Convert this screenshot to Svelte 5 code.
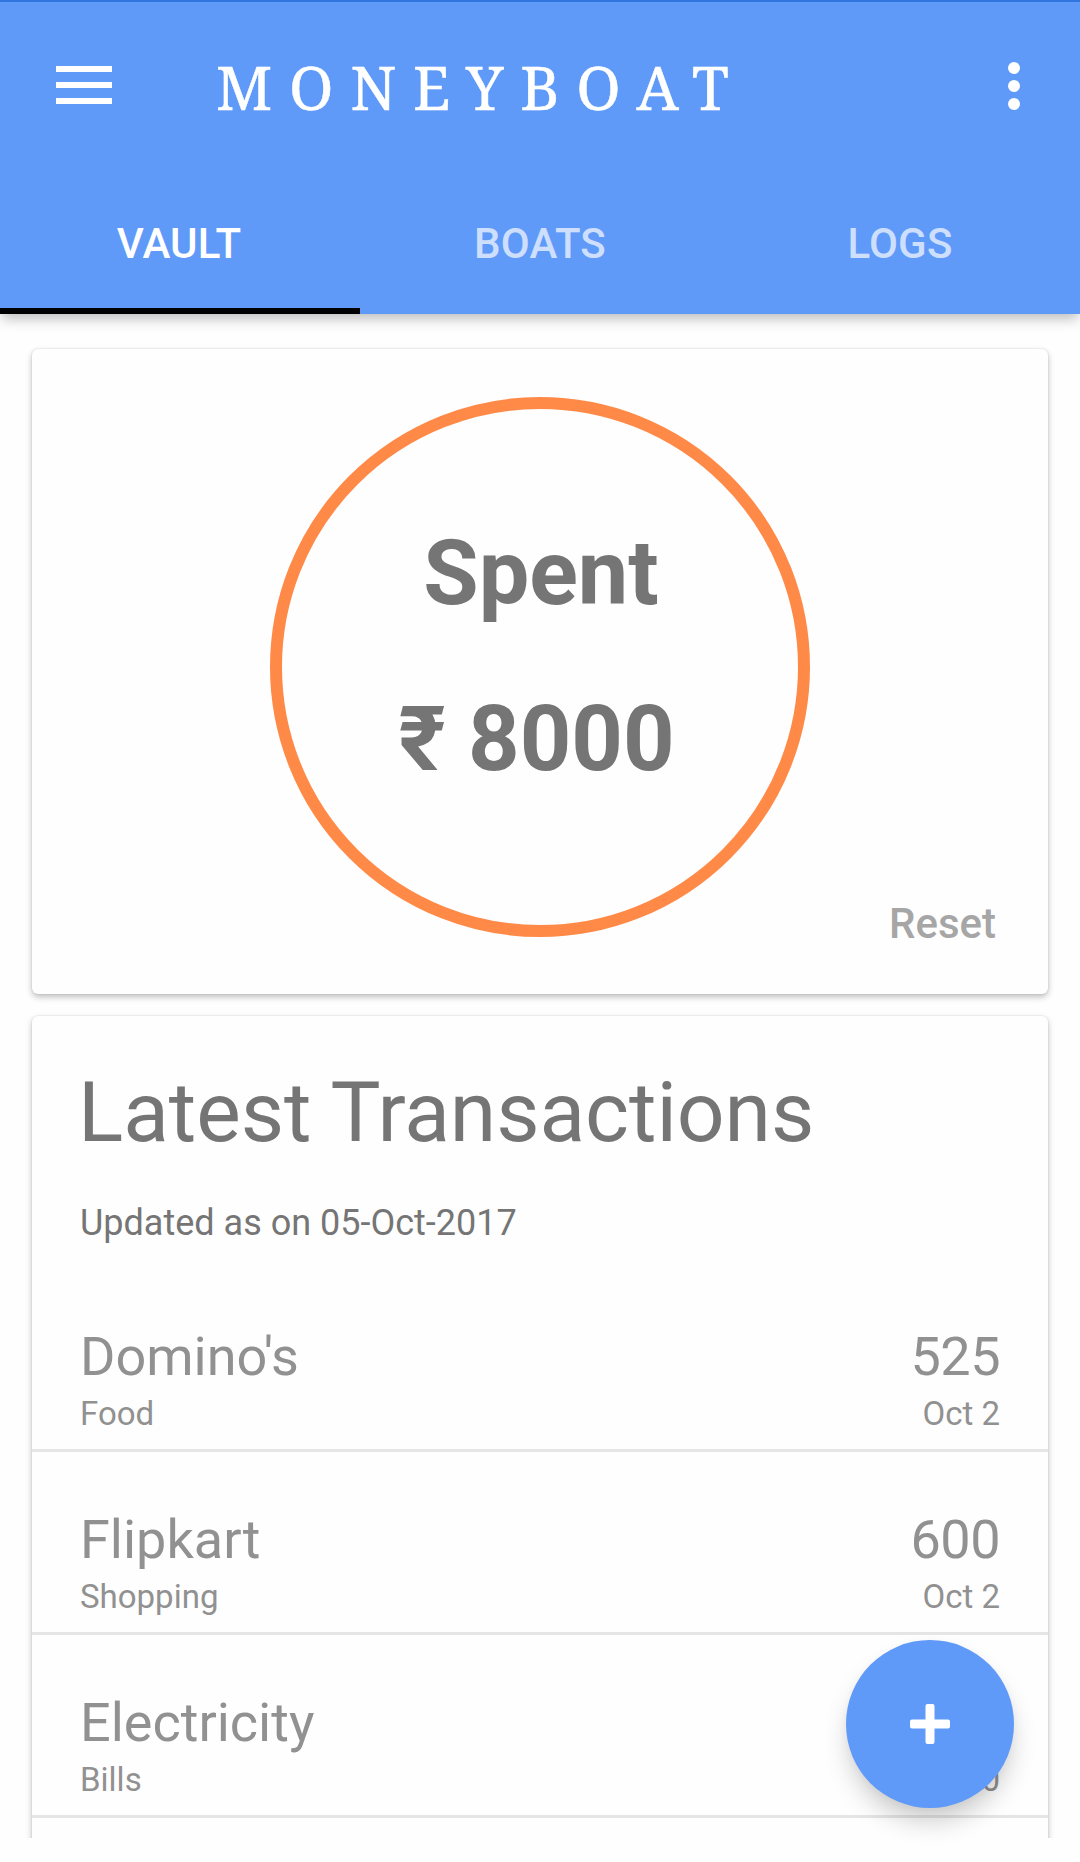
<script>
  const tabs = ['VAULT', 'BOATS', 'LOGS'];
  let active = $state(0);

  const transactions = [
    { name: "Domino's", category: 'Food', amount: 525, date: 'Oct 2' },
    { name: 'Flipkart', category: 'Shopping', amount: 600, date: 'Oct 2' },
    { name: 'Electricity', category: 'Bills', amount: 350, date: 'Sep 30' }
  ];
</script>

<div class="screen">
  <header class="app-bar">
    <div class="toolbar">
      <button class="icon-btn" aria-label="Menu">
        <svg width="56" height="40" viewBox="0 0 56 40" fill="#fff">
          <rect width="56" height="6" />
          <rect y="16" width="56" height="6" />
          <rect y="32" width="56" height="6" />
        </svg>
      </button>
      <h1 class="brand">MONEYBOAT</h1>
      <button class="icon-btn" aria-label="More options">
        <svg width="12" height="48" viewBox="0 0 12 48" fill="#fff">
          <circle cx="6" cy="6" r="6" />
          <circle cx="6" cy="24" r="6" />
          <circle cx="6" cy="42" r="6" />
        </svg>
      </button>
    </div>
    <nav class="tabs">
      {#each tabs as tab, i}
        <button class="tab" class:active={active === i} onclick={() => (active = i)}>{tab}</button>
      {/each}
    </nav>
  </header>

  <main class="content">
    <section class="card summary">
      <div class="ring">
        <span>Spent</span>
        <span class="total">₹ 8000</span>
      </div>
      <button class="reset">Reset</button>
    </section>

    <section class="card latest">
      <h2>Latest Transactions</h2>
      <p class="updated">Updated as on 05-Oct-2017</p>
      <ul>
        {#each transactions as t}
          <li>
            <div class="line main"><span>{t.name}</span><span class="amount">{t.amount}</span></div>
            <div class="line sub"><span>{t.category}</span><span>{t.date}</span></div>
          </li>
        {/each}
      </ul>
    </section>
  </main>

  <button class="fab" aria-label="Add transaction">
    <svg width="40" height="40" viewBox="0 0 40 40" fill="#fff">
      <rect x="15.5" width="9" height="40" rx="2" />
      <rect y="15.5" width="40" height="9" rx="2" />
    </svg>
  </button>
</div>

<style>
  :global(body) {
    margin: 0;
    background: #fefefe;
  }
  button {
    border: 0;
    padding: 0;
    margin: 0;
    background: none;
    font: inherit;
    color: inherit;
  }
  h1, h2, p, ul {
    margin: 0;
    padding: 0;
    font-weight: 400;
  }
  .screen {
    position: relative;
    width: 1080px;
    height: 1862px;
    overflow: hidden;
    display: flex;
    flex-direction: column;
    font-family: Roboto, sans-serif;
    color: #757575;
    background: #fefefe;
  }
  .app-bar {
    flex: none;
    position: relative;
    z-index: 1;
    box-sizing: border-box;
    height: 314px;
    border-top: 2px solid #3175de;
    background: #5f9af9;
    color: #fff;
    box-shadow: 0 7px 12px -2px rgba(0, 0, 0, 0.25);
  }
  .toolbar {
    display: flex;
    align-items: center;
    height: 168px;
    padding: 0 60px 0 56px;
  }
  .icon-btn {
    display: flex;
  }
  .brand {
    flex: 1;
    padding: 1px 0 0 104px;
    font-family: 'Noto Serif', 'DejaVu Serif Condensed', serif;
    font-size: 60px;
    line-height: 80px;
    letter-spacing: 16.8px;
    -webkit-text-stroke: 0.5px #fff;
    white-space: nowrap;
  }
  .tabs {
    display: grid;
    grid-template-columns: repeat(3, 1fr);
    height: 144px;
  }
  .tab {
    box-sizing: border-box;
    padding: 9px 0 0;
    border-bottom: 6px solid transparent;
    font-size: 42px;
    font-weight: 500;
    letter-spacing: 0.2px;
    color: rgba(255, 255, 255, 0.7);
  }
  .tab.active {
    padding-right: 2px;
    border-color: #000;
    color: #fff;
  }
  .content {
    flex: none;
    box-sizing: border-box;
    height: 1524px;
    padding: 35px 32px 0;
    overflow: hidden;
    display: flex;
    flex-direction: column;
    gap: 22px;
  }
  .card {
    flex: none;
    box-sizing: border-box;
    border-radius: 6px;
    background: #fefefe;
    box-shadow: 0 3px 6px rgba(0, 0, 0, 0.25), 0 0 2px rgba(0, 0, 0, 0.14);
  }
  .summary {
    display: grid;
    height: 645px;
    padding: 48px 52px 46px;
  }
  .ring {
    grid-area: 1 / 1;
    justify-self: center;
    box-sizing: border-box;
    width: 540px;
    height: 540px;
    padding: 0 0 20px 2px;
    border: 12px solid #ff8a47;
    border-radius: 50%;
    display: flex;
    flex-direction: column;
    align-items: center;
    justify-content: center;
    font-size: 90px;
    font-weight: 700;
    line-height: 166px;
  }
  .total {
    padding-right: 9px;
  }
  .reset {
    grid-area: 1 / 1;
    place-self: end;
    font-size: 42px;
    font-weight: 500;
    line-height: 48px;
    color: #a6a6a6;
  }
  .latest {
    height: 900px;
    padding-top: 47px;
  }
  h2 {
    padding: 0 46px;
    font-size: 84px;
    line-height: 100px;
    letter-spacing: -0.07px;
  }
  .updated {
    margin: 38px 0 24px;
    padding: 0 48px;
    font-size: 36px;
    line-height: 44px;
  }
  ul {
    list-style: none;
    color: #919191;
  }
  li {
    box-sizing: border-box;
    height: 183px;
    padding: 56px 48px 0;
    border-bottom: 3px solid #e5e5e5;
  }
  .line {
    display: flex;
    justify-content: space-between;
  }
  .main {
    font-size: 54px;
    line-height: 64px;
  }
  .amount {
    letter-spacing: -0.5px;
  }
  .sub {
    margin-top: 5px;
    font-size: 33px;
    line-height: 40px;
  }
  .fab {
    position: absolute;
    right: 66px;
    bottom: 54px;
    z-index: 2;
    width: 168px;
    height: 168px;
    border-radius: 50%;
    background: #5f9af9;
    display: flex;
    align-items: center;
    justify-content: center;
    box-shadow: 0 16px 26px -3px rgba(0, 0, 0, 0.2), 0 2px 8px rgba(0, 0, 0, 0.03);
  }
</style>
